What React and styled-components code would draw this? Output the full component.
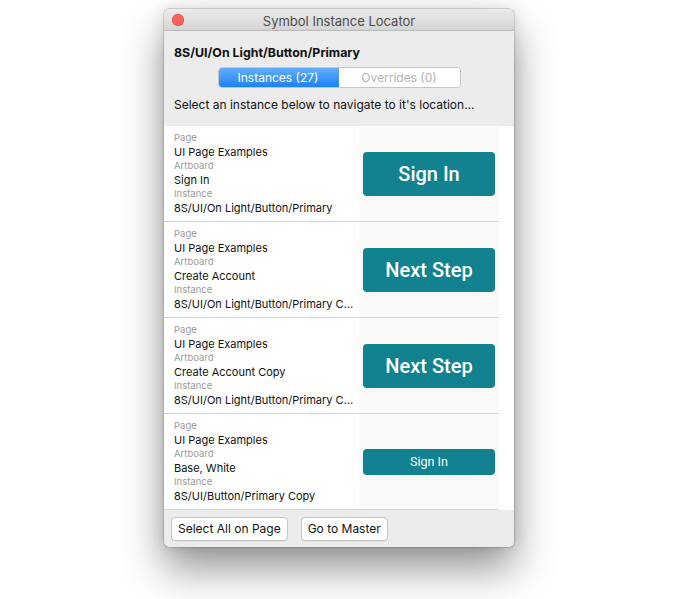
import React from "react";
import styled, { createGlobalStyle } from "styled-components";

const Global = createGlobalStyle`
  html, body { margin: 0; padding: 0; background: #ffffff; }
  body { font-family: Inter, "Noto Sans", "Liberation Sans", sans-serif; -webkit-font-smoothing: antialiased; }
`;

const Stage = styled.div`
  padding: 9px 0 0 164px;
  height: 599px;
  box-sizing: border-box;
`;

const Window = styled.div`
  width: 350px;
  height: 538px;
  border-radius: 5px;
  overflow: hidden;
  display: flex;
  flex-direction: column;
  background: #ececec;
  box-shadow: 0 0 0 0.5px rgba(0, 0, 0, 0.25), 0 22px 42px rgba(0, 0, 0, 0.42), 0 0 14px rgba(0, 0, 0, 0.12);
`;

const TitleBar = styled.div`
  position: relative;
  height: 22px;
  flex: none;
  box-sizing: border-box;
  padding-top: 2px;
  display: flex;
  align-items: center;
  justify-content: center;
  background: linear-gradient(#ebebeb, #d5d5d5);
  border-bottom: 1px solid #b9b9b9;
  font-size: 13px;
  color: #4d4d4d;
`;

const CloseDot = styled.span`
  position: absolute;
  left: 8px;
  top: 5px;
  width: 12px;
  height: 12px;
  border-radius: 50%;
  background: #fc605c;
  box-shadow: inset 0 0 0 0.5px #de4a45;
`;

const Header = styled.div`
  flex: none;
  padding: 14px 10px 0;
  height: 95px;
  box-sizing: border-box;
  display: flex;
  flex-direction: column;
`;

const SymbolName = styled.div`
  font-size: 12.4px;
  font-weight: 700;
  color: #111;
  line-height: 16px;
`;

const Segmented = styled.div`
  align-self: center;
  margin-top: 6px;
  display: flex;
  width: 243px;
  height: 21px;
  border-radius: 4px;
  overflow: hidden;
  box-sizing: border-box;
  border: 1px solid #c6c6c6;
`;

const Segment = styled.div`
  flex: 1;
  display: flex;
  align-items: center;
  justify-content: center;
  font-size: 12px;
  color: ${(p) => (p.$active ? "#ffffff" : "#b3b3b3")};
  background: ${(p) => (p.$active ? "linear-gradient(#66b0fb, #1a7ff9)" : "#ffffff")};
  margin: ${(p) => (p.$active ? "-1px 0 -1px -1px" : "0")};
`;

const Hint = styled.div`
  margin-top: 9px;
  font-size: 12px;
  color: #111;
  line-height: 16px;
`;

const List = styled.div`
  flex: none;
  height: 384px;
  background: #ffffff;
  padding-right: 15px;
  overflow: hidden;
`;

const Row = styled.div`
  display: flex;
  height: 96px;
  box-sizing: border-box;
  border-bottom: 1px solid #d6d6d6;
`;

const Info = styled.div`
  width: 195px;
  box-sizing: border-box;
  padding: 5px 5px 0 10px;
  display: flex;
  flex-direction: column;
  min-width: 0;
`;

const Label = styled.div`
  font-size: 9.5px;
  line-height: 14px;
  color: #9a9a9a;
`;

const Value = styled.div`
  font-size: 11px;
  line-height: 14px;
  color: #111;
  white-space: nowrap;
  overflow: hidden;
  text-overflow: ellipsis;
`;

const Preview = styled.div`
  flex: 1;
  background: #f9f9f9;
  display: flex;
  align-items: center;
  padding-left: 4px;
`;

const TealButton = styled.div`
  width: 132px;
  height: ${(p) => (p.$small ? "26px" : "44px")};
  border-radius: 4px;
  background: #128190;
  color: #ffffff;
  font-family: Roboto, "Noto Sans", sans-serif;
  font-weight: ${(p) => (p.$small ? 400 : 500)};
  font-size: ${(p) => (p.$small ? "12.5px" : "20px")};
  display: flex;
  align-items: center;
  justify-content: center;
`;

const Footer = styled.div`
  flex: 1;
  display: flex;
  align-items: center;
  gap: 13px;
  padding: 0 7px;
`;

const PushButton = styled.button`
  height: 24px;
  padding: 0 6px;
  background: #ffffff;
  border: 1px solid #c5c5c5;
  border-radius: 4px;
  font-family: Inter, "Noto Sans", sans-serif;
  font-size: 12px;
  color: #111;
  box-shadow: 0 0.5px 0 rgba(0, 0, 0, 0.08);
`;

const rows = [
  { page: "UI Page Examples", artboard: "Sign In", instance: "8S/UI/On Light/Button/Primary", label: "Sign In" },
  { page: "UI Page Examples", artboard: "Create Account", instance: "8S/UI/On Light/Button/Primary Copy", label: "Next Step" },
  { page: "UI Page Examples", artboard: "Create Account Copy", instance: "8S/UI/On Light/Button/Primary Copy 2", label: "Next Step" },
  { page: "UI Page Examples", artboard: "Base, White", instance: "8S/UI/Button/Primary Copy", label: "Sign In", small: true },
];

export default function App() {
  return (
    <>
      <Global />
      <Stage>
        <Window>
          <TitleBar>
            <CloseDot />
            Symbol Instance Locator
          </TitleBar>
          <Header>
            <SymbolName>8S/UI/On Light/Button/Primary</SymbolName>
            <Segmented>
              <Segment $active>Instances (27)</Segment>
              <Segment>Overrides (0)</Segment>
            </Segmented>
            <Hint>Select an instance below to navigate to it's location...</Hint>
          </Header>
          <List>
            {rows.map((r, i) => (
              <Row key={i}>
                <Info>
                  <Label>Page</Label>
                  <Value>{r.page}</Value>
                  <Label>Artboard</Label>
                  <Value>{r.artboard}</Value>
                  <Label>Instance</Label>
                  <Value>{r.instance}</Value>
                </Info>
                <Preview>
                  <TealButton $small={r.small}>{r.label}</TealButton>
                </Preview>
              </Row>
            ))}
          </List>
          <Footer>
            <PushButton>Select All on Page</PushButton>
            <PushButton>Go to Master</PushButton>
          </Footer>
        </Window>
      </Stage>
    </>
  );
}
